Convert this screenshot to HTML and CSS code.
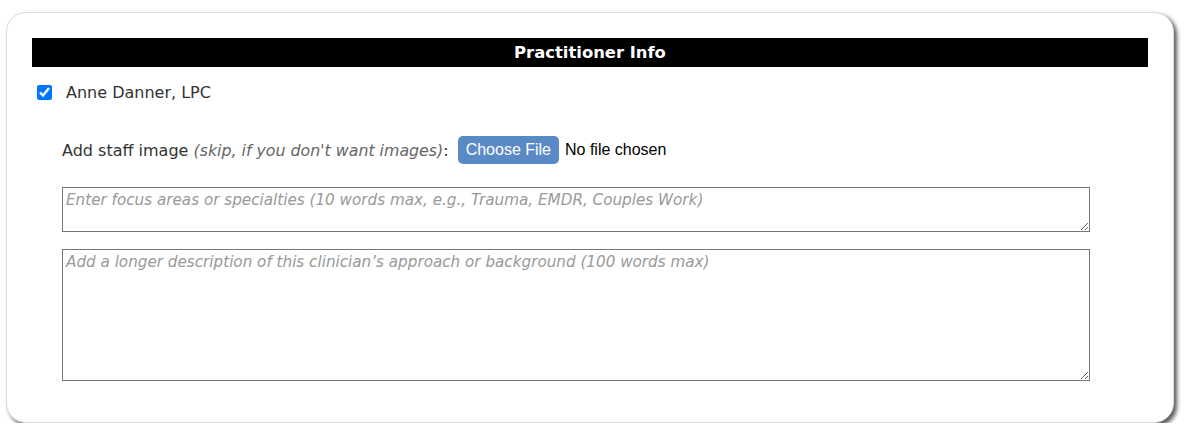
FILE: index.html
```html
<!DOCTYPE html>
<html>
<head>
<meta charset="utf-8">
<link rel="stylesheet" href="styles.css">
</head>
<body>
<div class="card">
  <div class="bar">Practitioner Info</div>
  <label class="person">
    <input type="checkbox" class="check" checked>
    <span class="name">Anne Danner, LPC</span>
  </label>
  <div class="details">
    <div class="upload">
      <span class="upload-label">Add staff image <em class="hint">(skip, if you don't want images)</em>:</span>
      <span class="file">
        <span class="file-btn">Choose File</span>
        <span class="file-none">No file chosen</span>
      </span>
    </div>
    <textarea class="field short" placeholder="Enter focus areas or specialties (10 words max, e.g., Trauma, EMDR, Couples Work)"></textarea>
    <textarea class="field long" placeholder="Add a longer description of this clinician’s approach or background (100 words max)"></textarea>
  </div>
</div>
</body>
</html>
```
FILE: styles.css
```css
html, body {
  margin: 0;
  padding: 0;
  background: #ffffff;
}
body {
  font-family: "DejaVu Sans", Verdana, sans-serif;
  color: #333333;
}
.card {
  box-sizing: border-box;
  width: 1168px;
  height: 411px;
  margin: 12px 0 0 6px;
  padding: 25px 25px 0 25px;
  border: 1px solid #dcdcdc;
  border-radius: 20px;
  background: #ffffff;
  box-shadow: 3px 3px 4px rgba(0, 0, 0, 0.65);
}
.bar {
  height: 29px;
  line-height: 29px;
  background: #000000;
  color: #ffffff;
  font-weight: bold;
  font-size: 16.4px;
  text-align: center;
}
.person {
  display: flex;
  align-items: center;
  margin-top: 15px;
  height: 20px;
}
.check {
  width: 15px;
  height: 15px;
  margin: 0 0 0 5px;
  accent-color: #0075ff;
}
.name {
  margin-left: 14px;
  font-size: 16px;
}
.details {
  padding-left: 30px;
}
.upload {
  display: flex;
  align-items: center;
  margin-top: 34px;
  height: 28px;
}
.upload-label {
  font-size: 16px;
}
.hint {
  color: #666666;
  font-size: 15.8px;
}
.file {
  display: flex;
  align-items: center;
  margin-left: 9px;
  font-family: "Liberation Sans", Arial, sans-serif;
  font-size: 16px;
}
.file-btn {
  box-sizing: border-box;
  height: 28px;
  line-height: 28px;
  padding: 0 8px;
  background: #5a8ac6;
  color: #ffffff;
  border-radius: 5px;
}
.file-none {
  margin-left: 6px;
  color: #000000;
}
.field {
  display: block;
  box-sizing: border-box;
  width: 1028px;
  margin: 0;
  padding: 3px 3px 2px 3px;
  border: 1px solid #767676;
  font-family: "DejaVu Sans", Verdana, sans-serif;
  font-size: 15.2px;
  font-style: italic;
  resize: vertical;
}
.field::placeholder {
  color: #999999;
}
.short {
  height: 45px;
  margin-top: 23px;
}
.long {
  height: 132px;
  margin-top: 17px;
}
```
